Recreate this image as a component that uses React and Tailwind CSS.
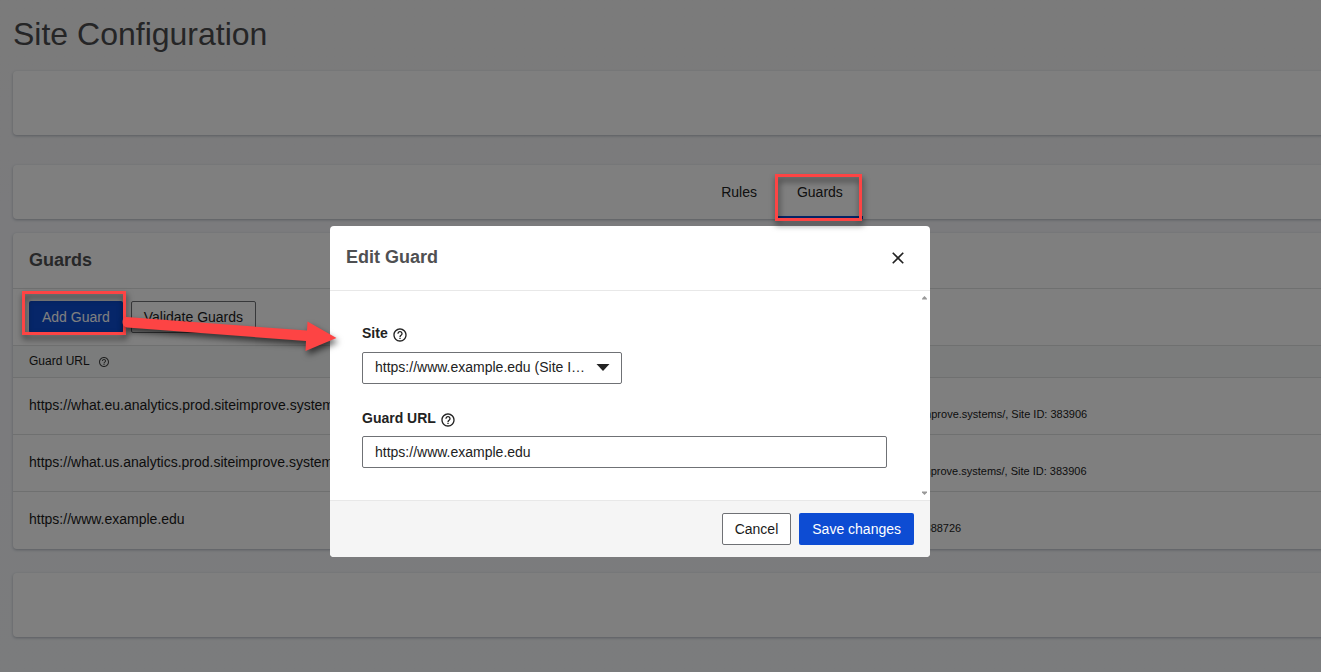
import { MdClose, MdHelpOutline } from "react-icons/md";

const card = "rounded bg-white shadow-[0_1px_3px_#b4b9c2]";
const outlineButton =
  "h-8 rounded-xs border border-[#6f7175] bg-white px-3 text-[#1a1a1a]";
const primaryButton = "h-8 rounded-xs bg-[#0d4cd3] px-[13px] text-white";
const fieldLabel = "flex h-4 items-center gap-1 font-bold leading-4";
const highlight =
  "pointer-events-none absolute z-30 border-3 border-[#fd4444] drop-shadow-[1px_4px_3px_rgba(0,0,0,0.6)]";

const guards = [
  {
    url: "https://what.eu.analytics.prod.siteimprove.systems/",
    site: "https://what.eu.analytics.prod.siteimprove.systems/, Site ID: 383906",
  },
  {
    url: "https://what.us.analytics.prod.siteimprove.systems/",
    site: "https://what.us.analytics.prod.siteimprove.systems/, Site ID: 383906",
  },
  {
    url: "https://www.example.edu",
    site: "https://www.example.edu, Site ID: 388726",
  },
];

function Arrow() {
  return (
    <svg
      aria-hidden="true"
      className="pointer-events-none absolute top-[15px] left-[97px] z-30 h-10 w-[220px] overflow-visible drop-shadow-[2px_4px_3px_rgba(0,0,0,0.6)]"
      viewBox="0 0 220 40"
      fill="#fd4444"
    >
      <path d="M0.500 1Q-3.500 1.500-3.500 6Q-3.500 10.500 1 11.500L180 25L179.500 35L210.500 22L181.500 5.500L181 14.500Z" />
    </svg>
  );
}

function Tabs() {
  return (
    <nav className={`${card} flex h-[54px] justify-center`}>
      <a href="#rules" className="h-full px-5 pt-[18px] leading-[18px]">
        Rules
      </a>
      <a
        href="#guards"
        aria-current="page"
        className="relative h-full border-b-3 border-[#0d4cd3] px-5 pt-[18px] leading-[18px]"
      >
        Guards
        <span className={`${highlight} top-[9px] right-px -bottom-[5px] -left-0.5`} />
      </a>
    </nav>
  );
}

function GuardTable() {
  return (
    <section className={`${card} text-[#1a1a1a]`}>
      <h2 className="border-b border-[#dfe0e1] px-4 pt-[15px] pb-4 text-lg leading-6 font-bold text-[#4f5052]">
        Guards
      </h2>
      <div className="relative flex gap-2 px-4 py-3">
        <div className="relative">
          <button className={primaryButton}>Add Guard</button>
          <span className={`${highlight} -top-[10px] -right-[3px] -bottom-[2px] -left-[7px]`} />
        </div>
        <button className={outlineButton}>Validate Guards</button>
        <div className="absolute top-3 left-4">
          <Arrow />
        </div>
      </div>
      <table className="w-full table-fixed border-collapse text-left">
        <thead>
          <tr className="h-8 border-y border-[#dfe0e1] bg-[#f6f9f8]">
            <th className="w-[728px] px-4 pt-0 pb-0.5 text-xs font-normal">
              <span className="flex items-center gap-2">
                Guard URL <MdHelpOutline className="mt-0.5 size-3 text-[#444]" />
              </span>
            </th>
            <th className="px-4 pt-0 pb-0.5 text-xs font-normal">Site</th>
          </tr>
        </thead>
        <tbody>
          {guards.map((guard) => (
            <tr
              key={guard.url}
              className="h-[57px] border-b border-[#dfe0e1] last:border-b-0"
            >
              <td className="px-4 pt-0 pb-0.5">{guard.url}</td>
              <td className="px-4 pt-[18px] pb-0 text-[11px]">{guard.site}</td>
            </tr>
          ))}
        </tbody>
      </table>
    </section>
  );
}

function EditGuardDialog() {
  return (
    <div
      role="dialog"
      aria-modal="true"
      aria-labelledby="dialog-title"
      className="w-[600px] max-w-full overflow-hidden rounded bg-white"
    >
      <header className="flex h-[65px] items-center justify-between border-b border-[#e8e8e8] px-4">
        <h2 id="dialog-title" className="pb-0.5 text-lg leading-6 font-bold text-[#4f5052]">
          Edit Guard
        </h2>
        <button aria-label="Close" className="flex size-8 items-center justify-center">
          <MdClose className="size-5" />
        </button>
      </header>
      <div className="flex">
        <div className="flex-1 px-8 pt-[34px] pb-8">
          <label htmlFor="site" className={fieldLabel}>
            Site <MdHelpOutline className="mt-1 size-4" />
          </label>
          <div className="relative mt-[11px] w-[260px] max-w-full">
            <select
              id="site"
              className="h-8 w-full appearance-none rounded-xs border border-[#6f7175] bg-white pr-8 pb-0.5 pl-3 text-ellipsis"
            >
              <option>https://www.example.edu (Site ID: 388726)</option>
            </select>
            <svg
              aria-hidden="true"
              className="pointer-events-none absolute top-3 right-3 h-[7px] w-3.5"
              viewBox="0 0 14 7"
              fill="#222"
            >
              <path d="M0.500 0H13.500L7 7Z" />
            </svg>
          </div>
          <label htmlFor="guard-url" className={`${fieldLabel} mt-[26px]`}>
            Guard URL <MdHelpOutline className="mt-1 size-4" />
          </label>
          <input
            id="guard-url"
            type="text"
            defaultValue="https://www.example.edu"
            className="mt-2.5 block h-8 w-full rounded-xs border border-[#6f7175] bg-white px-3"
          />
        </div>
        <div aria-hidden="true" className="flex w-[11px] flex-col items-center justify-between py-[5px]">
          <svg className="h-1 w-[5px]" viewBox="0 0 5 4" fill="#999">
            <path d="M0 3.500V2.500L2.500 0L5 2.500V3.500Z" />
          </svg>
          <svg className="h-1 w-[5px]" viewBox="0 0 5 4" fill="#999">
            <path d="M0 0.500V1.500L2.500 4L5 1.500V0.500Z" />
          </svg>
        </div>
      </div>
      <footer className="flex justify-end gap-2 border-t border-[#e8e8e8] bg-[#f5f5f5] px-4 py-3">
        <button className={outlineButton}>Cancel</button>
        <button className={primaryButton}>Save changes</button>
      </footer>
    </div>
  );
}

export default function App() {
  return (
    <div className="relative min-h-screen overflow-hidden bg-linear-to-b from-[#f6f6f6] via-[#f6f6fa] via-30% to-[#f6f8fb] font-['Liberation_Sans',Arial,sans-serif] text-sm text-[#222]">
      <main className="-mr-[230px] pt-3.5 pb-[35px] pl-[13px]">
        <h1 className="text-[32px] leading-10 text-[#4a4b4d]">Site Configuration</h1>
        <div className={`${card} mt-[17px] mb-[30px] h-16`} />
        <Tabs />
        <div className="mt-3.5 mb-6">
          <GuardTable />
        </div>
        <div className={`${card} h-16`} />
      </main>
      <div className="absolute inset-0 z-20 flex items-start justify-center bg-black/50 pt-[226px] pr-[61px]">
        <EditGuardDialog />
      </div>
    </div>
  );
}
